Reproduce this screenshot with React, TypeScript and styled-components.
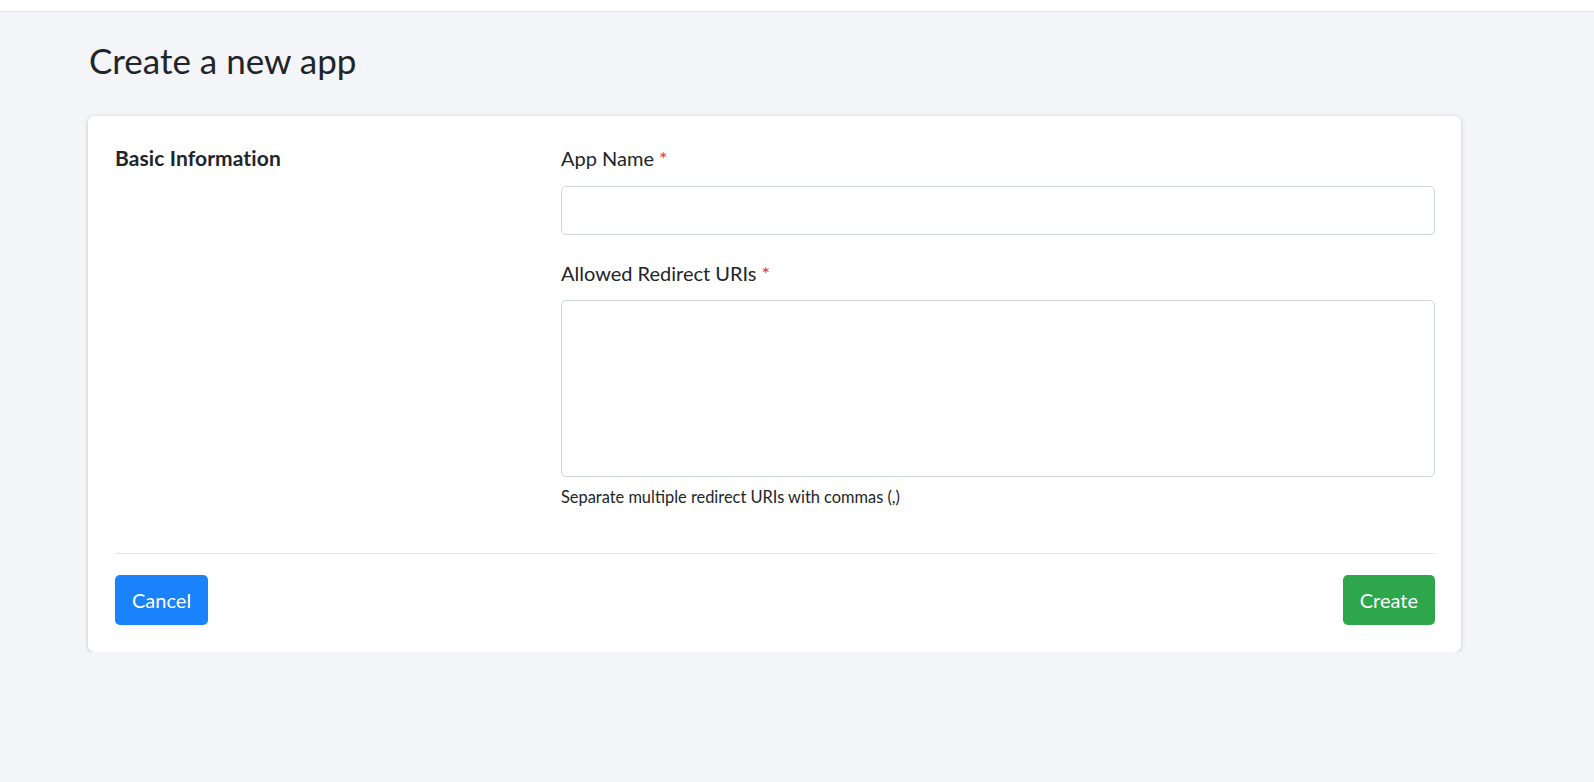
import React from "react";
import styled, { createGlobalStyle } from "styled-components";

const GlobalStyle = createGlobalStyle`
  html, body {
    margin: 0;
    padding: 0;
    background: #f4f5f8;
    font-family: Lato, "Liberation Sans", sans-serif;
    color: #212529;
  }
  * { box-sizing: border-box; }
`;

const TopBar = styled.header`
  height: 12px;
  background: #ffffff;
  border-bottom: 1px solid #dfe1e6;
`;

const Page = styled.main`
  padding: 27px 0 0 88px;
  width: 1461px;
`;

const Title = styled.h1`
  margin: 0 0 35px 1px;
  font-size: 35px;
  line-height: 42px;
  font-weight: 400;
  color: #212529;
`;

const Card = styled.section`
  background: #ffffff;
  border-radius: 6px;
  box-shadow: 0 1px 4px rgba(0, 0, 0, 0.2), 0 0 1px rgba(0, 0, 0, 0.06);
  padding: 27px 26px 27px 27px;
`;

const Body = styled.div`
  display: grid;
  grid-template-columns: 446px 1fr;
`;

const SectionTitle = styled.h2`
  margin: 0;
  font-size: 21px;
  line-height: 30px;
  font-weight: 700;
  letter-spacing: 0.1px;
`;

const Fields = styled.div`
  display: flex;
  flex-direction: column;
`;

const Group = styled.div`
  display: flex;
  flex-direction: column;
  & + & {
    margin-top: 23px;
  }
`;

const Label = styled.label<{ $gap: number }>`
  font-size: 20px;
  line-height: 30px;
  margin-bottom: ${(p) => p.$gap}px;
`;

const Required = styled.span`
  color: #dc3545;
  margin-left: 5px;
`;

const Input = styled.input`
  height: 49px;
  border: 1px solid #ced4da;
  border-radius: 5px;
  background: #fff;
  font: inherit;
  padding: 0 14px;
  outline: none;
`;

const TextArea = styled.textarea`
  height: 177px;
  border: 1px solid #ced4da;
  border-radius: 5px;
  background: #fff;
  font: inherit;
  padding: 8px 14px;
  resize: none;
  outline: none;
`;

const Help = styled.small`
  display: block;
  margin-top: 8px;
  font-size: 16.4px;
  line-height: 24px;
  color: #212529;
`;

const Divider = styled.hr`
  margin: 44px 0 0;
  border: 0;
  border-top: 1px solid #e2e4e8;
`;

const Footer = styled.div`
  display: flex;
  justify-content: space-between;
  padding-top: 21px;
`;

const Button = styled.button<{ $variant: "primary" | "success" }>`
  height: 50px;
  padding: 0 17px;
  border: 0;
  border-radius: 5px;
  font-family: inherit;
  font-size: 20px;
  color: #ffffff;
  cursor: pointer;
  background: ${(p) => (p.$variant === "primary" ? "#1a82fb" : "#2ea64c")};
`;

export default function App() {
  return (
    <>
      <GlobalStyle />
      <TopBar />
      <Page>
        <Title>Create a new app</Title>
        <Card>
          <Body>
            <SectionTitle>Basic Information</SectionTitle>
            <Fields>
              <Group>
                <Label $gap={13}>
                  App Name<Required>*</Required>
                </Label>
                <Input type="text" />
              </Group>
              <Group>
                <Label $gap={12}>
                  Allowed Redirect URIs<Required>*</Required>
                </Label>
                <TextArea />
                <Help>Separate multiple redirect URIs with commas (,)</Help>
              </Group>
            </Fields>
          </Body>
          <Divider />
          <Footer>
            <Button $variant="primary">Cancel</Button>
            <Button $variant="success">Create</Button>
          </Footer>
        </Card>
      </Page>
    </>
  );
}
